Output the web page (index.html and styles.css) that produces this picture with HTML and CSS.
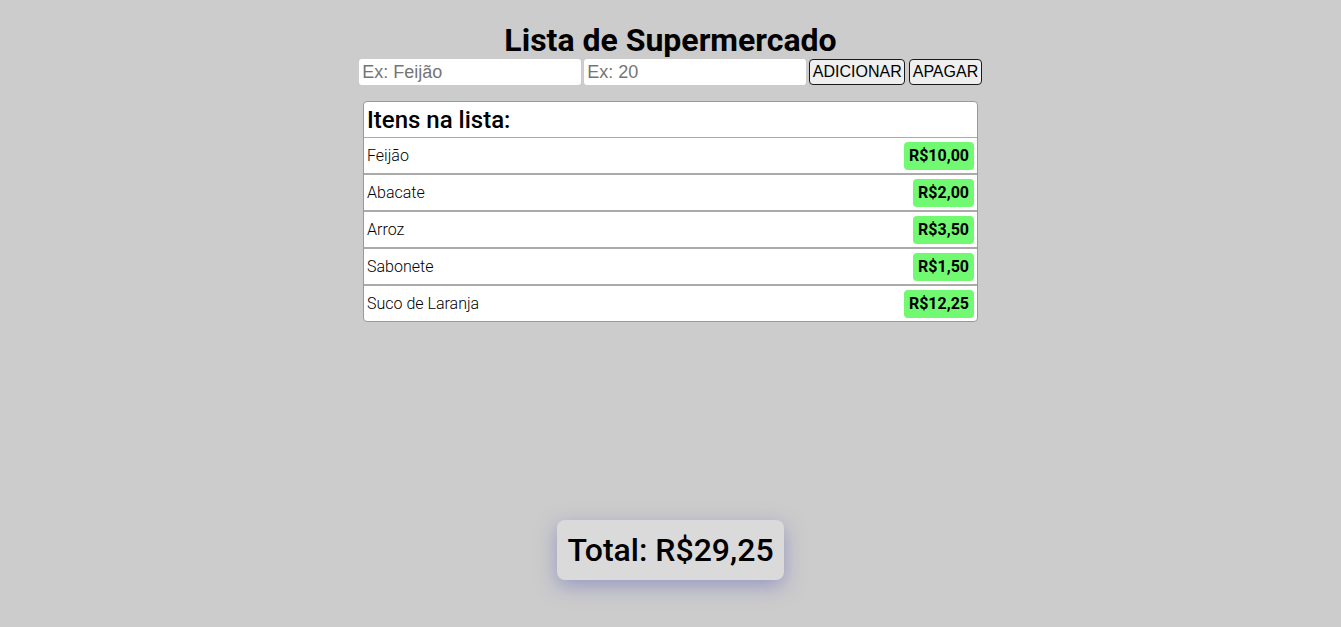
FILE: index.html
```html
<!DOCTYPE html>
<html lang="pt-BR">
<head>
<meta charset="utf-8">
<title>Lista de Supermercado</title>
<link rel="stylesheet" href="styles.css">
</head>
<body>
<div class="page">
  <main class="main">
    <h1 class="title">Lista de Supermercado</h1>
    <form class="controls">
      <input class="field" type="text" placeholder="Ex: Feijão">
      <input class="field" type="text" placeholder="Ex: 20">
      <button class="btn" type="button">ADICIONAR</button>
      <button class="btn" type="button">APAGAR</button>
    </form>
    <section class="list">
      <h2 class="list-head">Itens na lista:</h2>
      <ul class="items">
        <li class="item"><span class="name">Feijão</span><span class="price">R$10,00</span></li>
        <li class="item"><span class="name">Abacate</span><span class="price">R$2,00</span></li>
        <li class="item"><span class="name">Arroz</span><span class="price">R$3,50</span></li>
        <li class="item"><span class="name">Sabonete</span><span class="price">R$1,50</span></li>
        <li class="item"><span class="name">Suco de Laranja</span><span class="price">R$12,25</span></li>
      </ul>
    </section>
  </main>
  <div class="total">Total: R$29,25</div>
</div>
</body>
</html>
```

FILE: styles.css
```css
* { box-sizing: border-box; }
html, body { margin: 0; padding: 0; }
body {
  background: #cccccc;
  font-family: Roboto, "Liberation Sans", sans-serif;
  color: #000;
}
.page {
  min-height: 100vh;
  display: flex;
  flex-direction: column;
  align-items: center;
}
.main {
  flex: 1;
  display: flex;
  flex-direction: column;
  align-items: center;
  padding-top: 22px;
}
.title {
  margin: 0;
  font-size: 32px;
  font-weight: 700;
  line-height: 37px;
}
.controls {
  display: flex;
  gap: 3px;
  margin: 0;
}
.field {
  width: 222px;
  height: 26px;
  border: none;
  border-radius: 3px;
  background: #fff;
  font-family: "Liberation Sans", Arial, sans-serif;
  font-size: 18px;
  padding: 0 3px;
  outline: none;
}
.field::placeholder { color: #757575; }
.btn {
  height: 26px;
  padding: 0 2.5px;
  border: 1px solid #1a1a1a;
  border-radius: 4px;
  background: #efefef;
  font-family: "Liberation Sans", Arial, sans-serif;
  font-size: 16px;
  color: #000;
}
.btn + .btn { margin-left: 1px; }
.list {
  width: 615px;
  margin-top: 16px;
  background: #fff;
  border: 1px solid #999;
  border-radius: 4px;
  overflow: hidden;
}
.list-head {
  margin: 0;
  height: 36px;
  padding: 4px 3px 0;
  font-size: 24px;
  font-weight: 500;
  line-height: 28px;
  border-bottom: 1px solid #aaa;
}
.items {
  list-style: none;
  margin: 0;
  padding: 0;
}
.item {
  display: flex;
  justify-content: space-between;
  align-items: center;
  height: 37px;
  padding: 0 3px;
  border-bottom: 2px solid #aaa;
}
.item:last-child { border-bottom: none; height: 35px; }
.name {
  font-size: 16px;
  font-weight: 300;
}
.price {
  background: #72f972;
  border-radius: 4px;
  padding: 4px 5px;
  font-size: 16px;
  font-weight: 700;
  line-height: 20px;
}
.total {
  margin-bottom: 47px;
  background: #dadada;
  border-radius: 8px;
  padding: 11px 10px;
  font-size: 32px;
  font-weight: 500;
  line-height: 38px;
  box-shadow: 0 6px 20px rgba(110, 110, 190, 0.55);
}
```
